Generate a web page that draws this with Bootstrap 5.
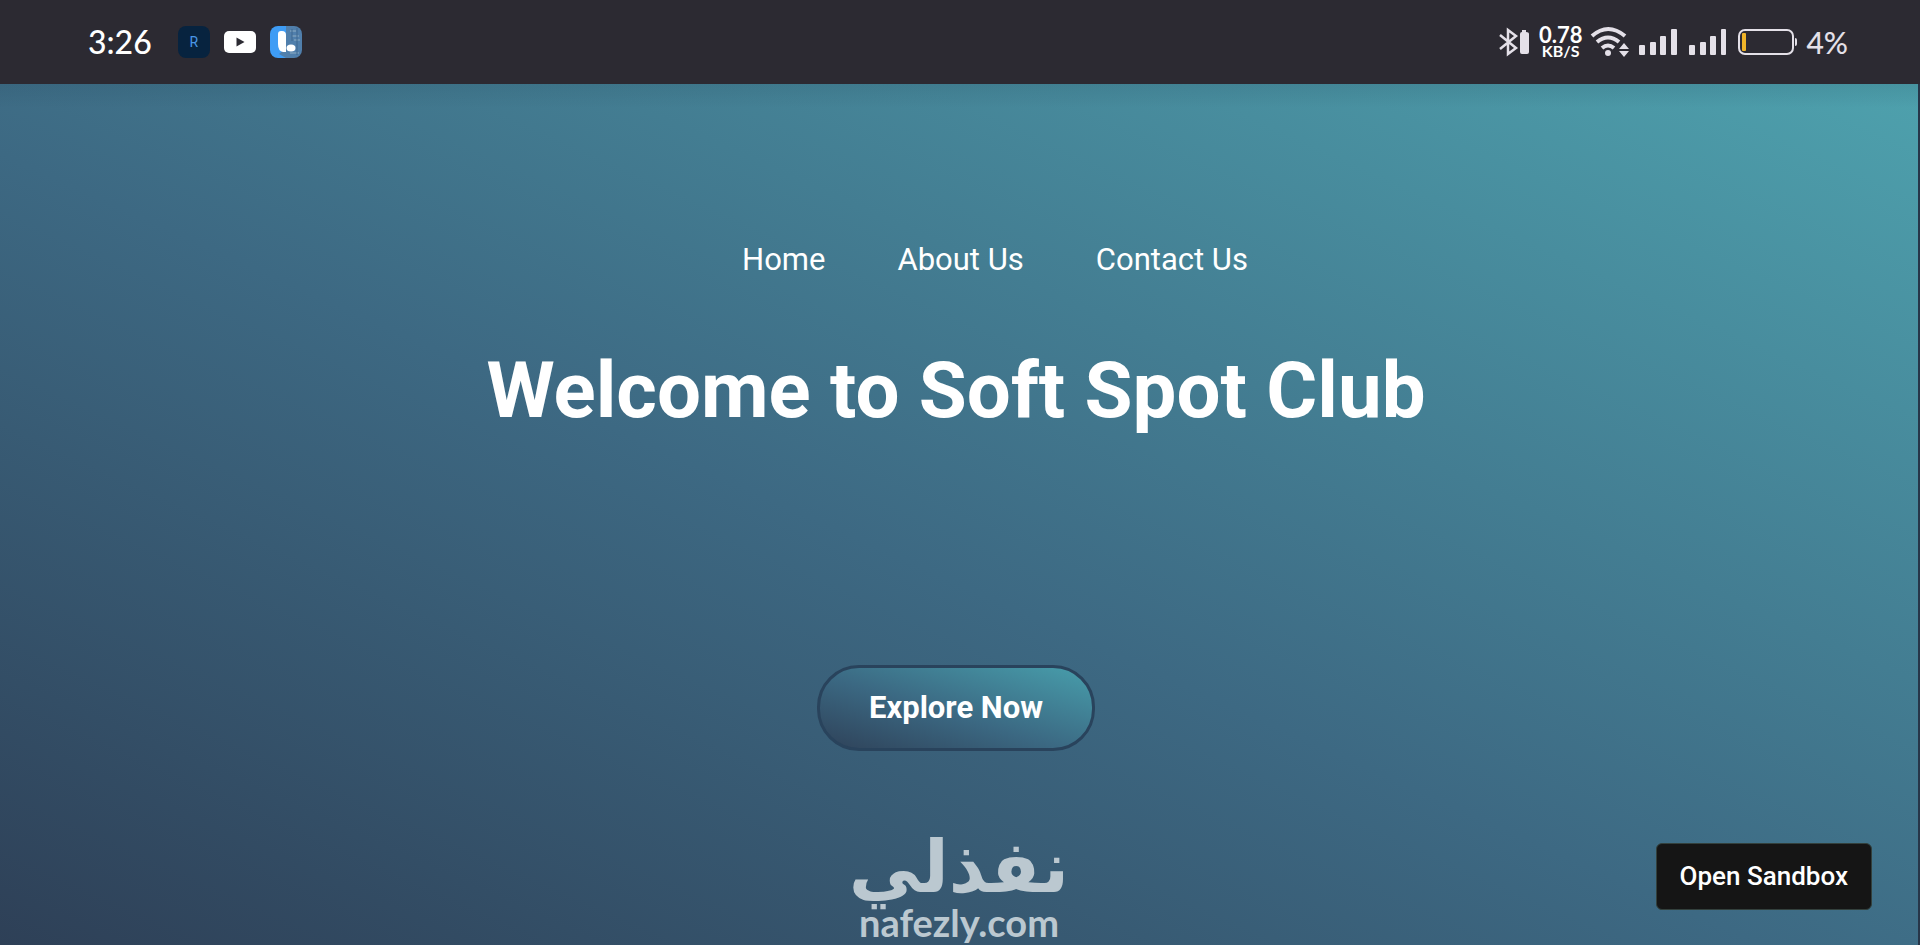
<!DOCTYPE html>
<html lang="en">
<head>
<meta charset="utf-8">
<meta name="viewport" content="width=device-width, initial-scale=1">
<title>Soft Spot Club</title>
<link href="https://cdn.jsdelivr.net/npm/bootstrap@5.3.0/dist/css/bootstrap.min.css" rel="stylesheet">
<style>
  body { font-family: Roboto, "Liberation Sans", sans-serif; background: #2c2a32; }
  .status-bar { height: 84px; padding: 0 72px 0 88px; background: #2c2a32; color: #e4e0e8; font-family: Lato, sans-serif; }
  .status-bar svg { display: block; flex: none; }
  .clock { font-size: 32px; line-height: 40px; color: #fff; font-weight: 500; margin-right: 26px; }
  .app-icons { gap: 14px; }
  .app-r { width: 32px; height: 32px; border-radius: 8px; background: #07233f; color: #4a97e6; font: 14px/32px Roboto, sans-serif; }
  .speed { font-size: 22px; line-height: 18px; font-weight: 700; color: #fff; }
  .speed small { font-size: 16px; line-height: 14px; }
  .battery-level { font-size: 30px; line-height: 40px; font-weight: 500; }
  .hero { padding-right: 6px; border-right: 2px solid #273649; background: linear-gradient(to top right, #2e4057, #3d6983 46%, #4ea1ad); }
  .hero::before { content: ""; position: absolute; inset: 0 0 auto; height: 24px; background: linear-gradient(rgba(20, 50, 70, .12), transparent); }
  .site-nav { gap: 72px; padding: 152px 0 0 78px; }
  .site-nav a { color: #fff; font-size: 31px; line-height: 48px; padding: 0; }
  .hero h1 { color: #fff; font-size: 78px; line-height: 96px; font-weight: 700; margin: 59px 0 0; }
  .btn-explore { --bs-btn-color: #fff; --bs-btn-hover-color: #fff; margin-top: 226px; padding: 17px 49px; font-size: 31px; line-height: 46px; font-weight: 700; border: 3px solid #29435c; border-radius: 42px; background: linear-gradient(to top right, #2e4057, #3b6882 45%, #48a0ad) border-box; }
  .btn-explore:hover { border-color: #1d3044; }
  .btn-sandbox { right: 46px; bottom: 35px; padding: 12px 23px; font-size: 26px; line-height: 41px; font-weight: 500; color: #fff; background: #151515; border: 1px solid #33403c; border-radius: 6px; }
  .watermark { left: 0; right: 0; bottom: 0; padding-bottom: 7px; color: #bbc8d0; pointer-events: none; }
  .watermark .brand-ar { font: 700 72px/78px "DejaVu Sans", sans-serif; }
  .watermark .brand-en { font: 700 38px/32px Lato, sans-serif; }
</style>
</head>
<body class="min-vh-100 d-flex flex-column overflow-hidden">
<header class="status-bar d-flex align-items-center justify-content-between">
  <div class="d-flex align-items-center">
    <time class="clock">3:26</time>
    <div class="app-icons d-flex align-items-center">
      <span class="app-r text-center">R</span>
      <svg width="32" height="24" viewBox="0 0 32 24" aria-hidden="true"><rect y="1" width="32" height="22" rx="5" fill="#fff"/><path d="M12.500 7.500v9l8-4.500z" fill="#2c2a32"/></svg>
      <svg width="32" height="32" viewBox="0 0 32 32" aria-hidden="true"><defs><clipPath id="tile"><rect width="32" height="32" rx="8"/></clipPath></defs><g clip-path="url(#tile)"><path fill="#3e9cf5" d="M0 0h17v32H0z"/><path fill="#507fac" d="M16 0h16v32H16l-7-4 7-6z"/><path d="M20 5h6M22 10h7M24 14h6M20 27h9" stroke="#6f96b8" stroke-width="2"/><path d="M27 2v27M22 3v12" stroke="#3e6890" stroke-width="1"/></g><path fill="#fff" d="M8 8q0-3 3-3h1q4 0 4 4v17h-3q-5-1-5-8z"/><ellipse cx="21" cy="22" rx="4.500" ry="3.500" fill="#fff"/></svg>
    </div>
  </div>
  <div class="d-flex align-items-center gap-2">
    <svg width="32" height="30" viewBox="0 0 32 30" fill="none" aria-label="Bluetooth"><path d="M1 8l16 13-8 6V3l8 6L1 22" stroke="#e4e0e8" stroke-width="2.500"/><path d="M21 7q0-2 2-2V3h4v2q3 0 3 2v18q0 2-2 2h-5q-2 0-2-2z" fill="#e4e0e8"/></svg>
    <div class="speed d-flex flex-column align-items-center">0.78<small>KB/S</small></div>
    <svg width="40" height="32" viewBox="0 0 40 32" fill="none" aria-label="Wi-Fi"><path d="M2 10q16-14 33 0M7 16q11-9 22 0M12 22q6-5 12 0" stroke="#e4e0e8" stroke-width="4"/><circle cx="18" cy="27" r="3" fill="#e4e0e8"/><path d="M34 17l5 6H29zM34 31l5-6H29z" fill="#e4e0e8"/></svg>
    <svg width="40" height="28" viewBox="0 0 40 28" fill="#e4e0e8" aria-label="Signal 1"><rect x="1" y="17" width="6" height="10" rx="1"/><rect x="12" y="14" width="6" height="13" rx="1"/><rect x="22" y="8" width="6" height="19" rx="1"/><rect x="33" y="1" width="6" height="26" rx="1"/></svg>
    <svg width="40" height="28" viewBox="0 0 40 28" fill="#e4e0e8" aria-label="Signal 2"><rect x="3" y="17" width="6" height="10" rx="1"/><rect x="14" y="14" width="6" height="13" rx="1"/><rect x="24" y="8" width="6" height="19" rx="1"/><rect x="35" y="1" width="5" height="26" rx="1"/></svg>
    <svg class="ms-1" width="60" height="28" viewBox="0 0 60 28" fill="none" aria-label="Battery"><rect x="1" y="2" width="54" height="24" rx="6" stroke="#e4e0e8" stroke-width="2"/><rect x="4" y="5" width="4" height="18" rx="1" fill="#f0b429"/><path d="M57 10q2 0 2 2v4q0 2-2 2z" fill="#e4e0e8"/></svg>
    <span class="battery-level">4%</span>
  </div>
</header>
<main class="hero position-relative flex-grow-1 d-flex flex-column align-items-center">
  <nav class="nav site-nav" aria-label="Main">
    <a class="nav-link" href="#">Home</a>
    <a class="nav-link" href="#about">About Us</a>
    <a class="nav-link" href="#contact">Contact Us</a>
  </nav>
  <h1 class="text-center">Welcome to Soft Spot Club</h1>
  <button type="button" class="btn btn-explore">Explore Now</button>
  <div class="watermark position-absolute d-flex flex-column align-items-center">
    <span class="brand-ar" lang="ar" dir="rtl">نفذلي</span>
    <span class="brand-en">nafezly.com</span>
  </div>
  <button type="button" class="btn btn-sandbox position-absolute">Open Sandbox</button>
</main>
<script src="https://cdn.jsdelivr.net/npm/bootstrap@5.3.0/dist/js/bootstrap.bundle.min.js"></script>
</body>
</html>
